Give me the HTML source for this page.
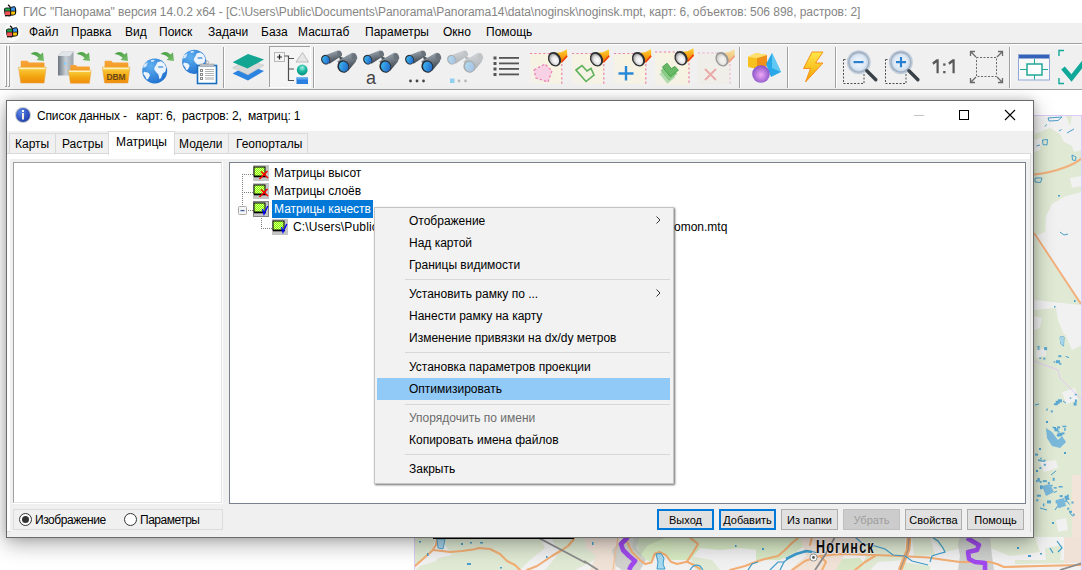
<!DOCTYPE html>
<html><head><meta charset="utf-8">
<style>
*{margin:0;padding:0;box-sizing:border-box}
html,body{width:1082px;height:570px;overflow:hidden;background:#fff;font-family:"Liberation Sans",sans-serif;font-size:12px;color:#000;position:relative}
.a{position:absolute}
.t{position:absolute;white-space:nowrap;line-height:14px}
.mi{position:absolute;left:409px;white-space:nowrap;line-height:14px}
.msep{position:absolute;left:405px;width:265px;height:1px;background:#d7d7d7}
.btn{position:absolute;top:509px;width:57px;height:21px;background:#e1e1e1;border:1px solid #adadad;text-align:center;line-height:20px;font-size:11px}
.btn.def{border:2px solid #0078d7;line-height:18px}
</style></head><body>
<!-- title -->
<div class="a" style="left:0;top:0;width:1082px;height:23px;background:#fff"></div>
<div class="t" style="left:23px;top:5px;color:#858585;letter-spacing:-0.05px">ГИС "Панорама" версия 14.0.2 x64 - [C:\Users\Public\Documents\Panorama\Panorama14\data\noginsk\noginsk.mpt, карт: 6, объектов: 506 898, растров: 2]</div>
<!-- menu -->
<div class="a" style="left:0;top:23px;width:1082px;height:20px;background:#f0f0f0"></div>
<div class="a" style="left:0;top:43px;width:1082px;height:1px;background:#a0a0a0"></div>
<div class="a" style="left:0;top:44px;width:1082px;height:1px;background:#fff"></div>
<div class="t" style="left:29px;top:25px">Файл</div>
<div class="t" style="left:71px;top:25px">Правка</div>
<div class="t" style="left:125px;top:25px">Вид</div>
<div class="t" style="left:159px;top:25px">Поиск</div>
<div class="t" style="left:208px;top:25px">Задачи</div>
<div class="t" style="left:261px;top:25px">База</div>
<div class="t" style="left:298px;top:25px">Масштаб</div>
<div class="t" style="left:365px;top:25px">Параметры</div>
<div class="t" style="left:443px;top:25px">Окно</div>
<div class="t" style="left:486px;top:25px">Помощь</div>
<!-- toolbar bg -->
<div class="a" style="left:0;top:45px;width:1082px;height:44px;background:#f0f0f0"></div>
<div class="a" style="left:0;top:89px;width:1082px;height:1px;background:#a0a0a0"></div>
<svg class="a" style="left:0;top:0" width="1082" height="90" viewBox="0 0 1082 90">
<defs>
 <linearGradient id="gFold" x1="0" y1="0" x2="0" y2="1"><stop offset="0" stop-color="#fde58a"/><stop offset="0.12" stop-color="#f9c93a"/><stop offset="0.55" stop-color="#f3a812"/><stop offset="1" stop-color="#ef8a0c"/></linearGradient>
 <linearGradient id="gTab" x1="0" y1="0" x2="0" y2="1"><stop offset="0" stop-color="#f7a53a"/><stop offset="1" stop-color="#f39a20"/></linearGradient>
 <linearGradient id="gArr" x1="0" y1="0" x2="1" y2="1"><stop offset="0" stop-color="#3f9a3c"/><stop offset="1" stop-color="#7cc070"/></linearGradient>
 <radialGradient id="gGlobe" cx="0.35" cy="0.3" r="0.8"><stop offset="0" stop-color="#5fb0f0"/><stop offset="1" stop-color="#1b6ccc"/></radialGradient>
 <linearGradient id="gSrv" x1="0" y1="0" x2="1" y2="0"><stop offset="0" stop-color="#6c7680"/><stop offset="0.5" stop-color="#c9d0d6"/><stop offset="1" stop-color="#9aa3ab"/></linearGradient>
 <linearGradient id="gLens" x1="0" y1="0" x2="1" y2="1"><stop offset="0" stop-color="#3fc0f5"/><stop offset="1" stop-color="#1f5ec4"/></linearGradient>
 <linearGradient id="gBar" x1="0" y1="0" x2="0.3" y2="1"><stop offset="0" stop-color="#a9b2ba"/><stop offset="0.5" stop-color="#78828c"/><stop offset="1" stop-color="#3f464e"/></linearGradient>
 <linearGradient id="gTorch" x1="0" y1="0" x2="0" y2="1"><stop offset="0" stop-color="#ffd23a"/><stop offset="0.6" stop-color="#f59a0a"/><stop offset="1" stop-color="#e05010"/></linearGradient>
 <radialGradient id="gGlass" cx="0.55" cy="0.6" r="0.6"><stop offset="0" stop-color="#ffffff"/><stop offset="0.55" stop-color="#e6e6e6"/><stop offset="1" stop-color="#9a9a9a"/></radialGradient>
 <linearGradient id="gBolt" x1="0" y1="0" x2="0" y2="1"><stop offset="0" stop-color="#ffe84a"/><stop offset="1" stop-color="#f5a000"/></linearGradient>
 <radialGradient id="gBall" cx="0.5" cy="0.55" r="0.6"><stop offset="0" stop-color="#f0a8f8"/><stop offset="1" stop-color="#7a48c0"/></radialGradient>
 <radialGradient id="gTeal" cx="0.5" cy="0.3" r="0.7"><stop offset="0" stop-color="#a8f0e4"/><stop offset="0.5" stop-color="#18b8a0"/><stop offset="1" stop-color="#089080"/></radialGradient>
 <linearGradient id="gCream" x1="1" y1="0" x2="0" y2="1"><stop offset="0" stop-color="#faf4dc"/><stop offset="1" stop-color="#f3f1ea"/></linearGradient>
 <radialGradient id="gMag" cx="0.5" cy="0.5" r="0.5"><stop offset="0" stop-color="#f4f8fd"/><stop offset="0.75" stop-color="#dce8f5"/><stop offset="1" stop-color="#c0cfe0"/></radialGradient>

 <g id="globe">
  <circle cx="0" cy="0" r="12.5" fill="url(#gGlobe)"/>
  <path d="M1.1 -5.5 L2.7 -8.7 L6.3 -9.7 L9.5 -7.6 L11.6 -3.4 L10.6 0.8 L7.9 2.4 L6.3 7.1 L4.8 8.2 L3.7 3.4 L1.1 0.8 L-0.5 -1.8 L0 -4Z" fill="#eef4fb"/>
  <path d="M3 -4.5 L8 -4.8 L9 -3.5 L4 -3.2Z" fill="#3d8fe0"/>
  <path d="M-10.5 0.8 L-6.3 1.8 L-4.7 4 L-6.3 7.6 L-7.9 8.7 L-9.4 5.5 L-11.5 2.4Z" fill="#eef4fb"/>
  <path d="M-11 -6.6 L-6.8 -8.7 L-8.4 -4.5 L-11.3 -3Z" fill="#eef4fb" opacity="0.85"/>
  <path d="M-3.7 -10.8 L0 -11 L-1 -9.5 L-3.5 -9.3Z" fill="#eef4fb"/>
 </g>
 <g id="folder">
  <path d="M2.3 10.5 V4.5 Q2.3 3.8 3 3.8 H9 L10.5 5.6 H25.2 Q26 5.6 26 6.4 V11 Z" fill="url(#gTab)"/>
  <path d="M0 10.2 H27.6 L25.6 26 H2.3 Z" fill="url(#gFold)" stroke="#e9a84a" stroke-width="0.6"/>
  <path d="M0.5 10.8 H27 L26.8 12.2 H0.7 Z" fill="#fff3c0" opacity="0.9"/>
 </g>
 <g id="arrow">
  <path d="M0 3 Q5 -1 10 3.5 L12.5 1.5 L13.5 10 L6 9 L8.2 7 Q5 3.5 0 3 Z" fill="url(#gArr)"/>
 </g>
 <g id="binoc">
  <path d="M1 6.5 L16.5 0.6 Q19.5 0 20.3 2.8 L20.6 6 L8.5 13.8 Z" fill="url(#gBar)"/>
  <ellipse cx="18.6" cy="3.6" rx="2.2" ry="3" transform="rotate(-25 18.6 3.6)" fill="#6a737c"/>
  <path d="M18 6 L24 8.5 L24.5 12 L19 11 Z" fill="#4d545b"/>
  <ellipse cx="4.6" cy="9.7" rx="4.4" ry="5" transform="rotate(-25 4.6 9.7)" fill="#262c32"/>
  <ellipse cx="4.9" cy="9.8" rx="3.4" ry="4" transform="rotate(-25 4.9 9.8)" fill="url(#gLens)"/>
  <path d="M16 11.5 L30.5 3 Q34.5 2 35.5 6 L35 11.5 L27 21 Z" fill="url(#gBar)"/>
  <ellipse cx="33.3" cy="6.8" rx="2.6" ry="3.6" transform="rotate(-25 33.3 6.8)" fill="#6a737c"/>
  <ellipse cx="22.3" cy="16.5" rx="5.8" ry="6.3" transform="rotate(-25 22.3 16.5)" fill="#262c32"/>
  <ellipse cx="22.7" cy="16.6" rx="4.6" ry="5.1" transform="rotate(-25 22.7 16.6)" fill="url(#gLens)"/>
 </g>
 <g id="torch">
  <path d="M1.5 -6.5 L6.5 -7 L12.5 -10 L12.8 -2 L6 4 Z" fill="url(#gTorch)"/>
  <path d="M7 3 L12.5 -3.5" stroke="#f04010" stroke-width="1.6"/>
  <ellipse cx="0" cy="0" rx="6.2" ry="7.6" transform="rotate(-30 0 0)" fill="#2c2f33"/>
  <ellipse cx="-0.3" cy="0.3" rx="4.6" ry="6" transform="rotate(-30 -0.3 0.3)" fill="url(#gGlass)"/>
 </g>
 <g id="mag">
  <circle cx="0" cy="0" r="12" fill="#c3cedb"/>
  <circle cx="0" cy="0" r="10.6" fill="#9eadc0"/>
  <circle cx="0" cy="0" r="9.3" fill="url(#gMag)"/>
  <path d="M8 8.5 L17 17.5" stroke="#394148" stroke-width="3.4" stroke-linecap="round"/>
 </g>
</defs>

<!-- app icons -->
<g id="appic">
 <path d="M4 9 Q4.5 7.3 6.8 7.5 L10.3 7.8 L11 7 Q13 6 14.8 6.3 L16 8 Q16.5 11 16 13.8 Q15.5 15.5 13.2 15.5 L11 15.7 L9.8 16.5 Q7.2 16 5.2 16.5 Q4 13 4 9Z" fill="#111"/>
 <rect x="5.1" y="8.4" width="5" height="2.3" fill="#1fa64a"/>
 <path d="M11.1 7.8 Q13 7 14.9 7.3 L15 10.7 H11.1Z" fill="#3d94ea"/>
 <rect x="5.1" y="11.4" width="5" height="3.7" fill="#ee5555"/>
 <path d="M11.1 11.4 H15 Q15.2 13.5 14.5 14.5 L11.1 14.6Z" fill="#f8c40a"/>
 <path d="M8 4.8 Q9.5 5.5 10.5 8" stroke="#111" stroke-width="1.3" fill="none"/>
</g>
<circle cx="12.5" cy="32.5" r="8.5" fill="#fbfbfb"/>
<use href="#appic" x="2" y="21"/>

<!-- grip -->
<rect x="1" y="45" width="12" height="44" fill="#f3f3f3"/>
<rect x="5" y="46" width="1" height="41" fill="#fff"/><rect x="6" y="46" width="1" height="41" fill="#a0a0a0"/><rect x="5" y="86" width="1" height="1" fill="#a0a0a0"/>
<rect x="8" y="46" width="1" height="41" fill="#fff"/><rect x="9" y="46" width="1" height="41" fill="#a0a0a0"/><rect x="8" y="86" width="1" height="1" fill="#a0a0a0"/>

<!-- open folders -->
<use href="#folder" x="18.5" y="57"/>
<use href="#arrow" x="30.5" y="51"/>
<!-- server -->
<path d="M58 56 L62 51.5 H73.5 V73 L71 75.5 H58 Z" fill="url(#gSrv)"/>
<path d="M62 51.5 H73.5 L70 56 H58Z" fill="#dfe4e8"/>
<circle cx="65" cy="63.5" r="1.2" fill="#7fd0ff"/>
<g transform="translate(68.5 62) scale(0.82)"><use href="#folder"/></g>
<use href="#arrow" x="76.5" y="51"/>
<!-- DBM -->
<use href="#folder" x="102.3" y="57"/>
<use href="#arrow" x="114.5" y="51"/>
<text x="116" y="79.5" font-family="Liberation Sans" font-size="8.5" font-weight="bold" fill="#6a4a14" text-anchor="middle" letter-spacing="-0.2">DBM</text>
<!-- globe -->
<g transform="translate(154.7 71)"><use href="#globe"/></g>
<use href="#arrow" x="160.5" y="51"/>
<!-- globe + clipboard -->
<g transform="translate(194.2 61.8) scale(0.97)"><use href="#globe"/></g>
<rect x="197.5" y="65.5" width="19" height="18" fill="#ffffff" stroke="#1a6fbf" stroke-width="1.6"/>
<rect x="200" y="64" width="14" height="2.2" fill="#bfc4c8" stroke="#8a9096" stroke-width="0.5"/>
<circle cx="207" cy="62.5" r="1.6" fill="none" stroke="#9aa0a6" stroke-width="0.8"/>
<g fill="none" stroke="#8a8a8a" stroke-width="1"><rect x="200.5" y="69.5" width="2" height="2"/><rect x="200.5" y="73.5" width="2" height="2"/><rect x="200.5" y="77.5" width="2" height="2"/></g>
<g fill="#b4b4b4"><rect x="205" y="69" width="9" height="1"/><rect x="205" y="71" width="9" height="1"/><rect x="205" y="73" width="9" height="1"/><rect x="205" y="75" width="9" height="1"/><rect x="205" y="77" width="9" height="3" fill="#d4d4d4"/></g>

<!-- separators -->
<rect x="223" y="47" width="1" height="41" fill="#a0a0a0"/><rect x="224" y="47" width="1" height="41" fill="#fff"/>
<!-- layers -->
<path d="M232.6 73.5 L248 65 L264 71 L248 80.5Z" fill="#2a84e0"/>
<path d="M232.6 67.8 L248 59.5 L264 65.3 L248 74.8Z" fill="#d9d9d9" stroke="#c4c4c4" stroke-width="0.6"/>
<path d="M232.6 62.2 L248 53.9 L264 59.5 L247.5 68.5Z" fill="#12a592"/>
<!-- pressed tree button -->
<rect x="269" y="46" width="41" height="41" fill="#f5f5f5"/>
<rect x="269" y="46" width="41" height="1" fill="#a0a0a0"/><rect x="269" y="46" width="1" height="41" fill="#a0a0a0"/>
<rect x="310" y="46" width="1" height="42" fill="#fff"/><rect x="269" y="87" width="42" height="1" fill="#fff"/>
<rect x="274.5" y="52.5" width="10" height="9" fill="#f4f4f4" stroke="#b8b8b8" stroke-width="1"/>
<path d="M277 57 H282 M279.5 54.5 V59.5" stroke="#222" stroke-width="1.2"/>
<path d="M284.5 56 H288.5 V80.5 H294 M288.5 58.5 H294 M288.5 69 H294" fill="none" stroke="#505050" stroke-width="1.2"/>
<path d="M296 62 L302.5 52.5 L308.5 62Z" fill="#e6e6e6" stroke="#b0b0b0" stroke-width="0.8"/>
<circle cx="302.2" cy="70" r="5.4" fill="url(#gTeal)"/>
<rect x="296.5" y="77.5" width="11.5" height="6.5" fill="#2a80e0"/>
<rect x="296.5" y="77.5" width="11.5" height="2" fill="#5aa8f0"/>
<rect x="313" y="47" width="1" height="41" fill="#a0a0a0"/><rect x="314" y="47" width="1" height="41" fill="#fff"/>

<!-- binoculars -->
<use href="#binoc" x="321" y="50"/>
<use href="#binoc" x="363" y="50"/>
<text x="371" y="83.5" font-family="Liberation Sans" font-size="18" fill="#454545" text-anchor="middle">a</text>
<use href="#binoc" x="405" y="50"/>
<circle cx="410.5" cy="81" r="1.4" fill="#444"/><circle cx="417" cy="81" r="1.4" fill="#444"/><circle cx="423.5" cy="81" r="1.4" fill="#444"/>
<g opacity="0.35"><use href="#binoc" x="447" y="50"/></g>
<rect x="450" y="78.5" width="4.5" height="4.5" fill="#8fd0f0"/>
<circle cx="459" cy="81" r="1.4" fill="#b8b8b8"/><circle cx="465.5" cy="81" r="1.4" fill="#b8b8b8"/>
<!-- list -->
<g fill="#555"><rect x="493.5" y="56.5" width="3" height="3"/><rect x="493.5" y="62" width="3" height="3"/><rect x="493.5" y="67.5" width="3" height="3"/><rect x="493.5" y="73" width="3" height="3"/>
<rect x="499" y="57" width="20" height="1.8"/><rect x="499" y="62.5" width="20" height="1.8"/><rect x="499" y="68" width="20" height="1.8"/><rect x="499" y="73.5" width="20" height="1.8"/></g>

<!-- torch icons -->
<g>
 <rect x="530" y="53" width="32" height="31" fill="url(#gCream)"/>
 <path d="M530 53.5 H552" stroke="#e880b0" stroke-width="1.2" stroke-dasharray="2.2 2.2"/>
 <path d="M561.8 64 V84" stroke="#e880b0" stroke-width="1.2" stroke-dasharray="2.2 2.2"/>
 <path d="M534 70 L545 64 L552 71 L548 82 L536 78Z" fill="#f8d2e4" stroke="#e880b0" stroke-width="1.2" stroke-dasharray="2.5 2"/>
 <use href="#torch" x="554.5" y="59.2"/>
</g>
<g>
 <rect x="572" y="53" width="32" height="31" fill="url(#gCream)"/>
 <path d="M572 53.5 H594" stroke="#e880b0" stroke-width="1.2" stroke-dasharray="2.2 2.2"/>
 <path d="M603.8 64 V84" stroke="#e880b0" stroke-width="1.2" stroke-dasharray="2.2 2.2"/>
 <path d="M576 70 L582 65.5 L587 71 L591 68.5 L594 75 L586 81.5Z" fill="none" stroke="#5cb05a" stroke-width="1.6"/>
 <use href="#torch" x="596.5" y="59.2"/>
</g>
<g>
 <rect x="614" y="53" width="32" height="31" fill="url(#gCream)"/>
 <path d="M614 53.5 H636" stroke="#e880b0" stroke-width="1.2" stroke-dasharray="2.2 2.2"/>
 <path d="M645.8 64 V84" stroke="#e880b0" stroke-width="1.2" stroke-dasharray="2.2 2.2"/>
 <path d="M618.5 73.5 H633.5 M626 66 V80.5" stroke="#2a88d8" stroke-width="2.4"/>
 <use href="#torch" x="638.5" y="59.2"/>
</g>
<g>
 <rect x="655" y="52" width="35" height="33" fill="url(#gCream)"/>
 <path d="M655 52 H678" stroke="#e880b0" stroke-width="1.2" stroke-dasharray="2.2 2.2"/>
 <path d="M689 63 V85" stroke="#e880b0" stroke-width="1.2" stroke-dasharray="2.2 2.2"/>
 <path d="M659.4 73.9 L664.1 70.2 L668.3 75.6 L672 73.4 L675.4 77.3 L667.3 83.7Z" fill="#b4dcb0"/>
 <path d="M660.9 70.4 L665.6 66.7 L669.8 72.1 L673.5 69.9 L676.9 73.8 L668.8 80.2Z" fill="#8ccc88" stroke="#6ab868" stroke-width="0.5"/>
 <path d="M662.4 66.9 L667.1 63.2 L671.3 68.6 L675 66.4 L678.4 70.3 L670.3 76.7Z" fill="#68b868" stroke="#3a9a3a" stroke-width="0.8"/>
 <use href="#torch" x="681" y="58.2"/>
</g>
<g opacity="0.45">
 <rect x="698" y="53" width="32" height="31" fill="#f0ece0"/>
 <path d="M698 52.8 H720" stroke="#e880b0" stroke-width="1.2" stroke-dasharray="2.2 2.2"/>
 <path d="M730 64 V84" stroke="#e880b0" stroke-width="1.2" stroke-dasharray="2.2 2.2"/>
</g>
<path d="M705 69 L716 80 M716 69 L705 80" stroke="#eba8a8" stroke-width="1.8"/>
<g opacity="0.45"><use href="#torch" x="722" y="59.2"/></g>
<rect x="739" y="47" width="1" height="41" fill="#a0a0a0"/><rect x="740" y="47" width="1" height="41" fill="#fff"/>

<!-- shapes -->
<path d="M748 57 L756 53 L767 55 L767 66 L757 69 L748 67Z" fill="#f5c020"/>
<path d="M757 58 L767 55 L767 66 L757 69Z" fill="#f0901a"/>
<path d="M748 57 L756 53 L767 55 L757 58Z" fill="#ffe070"/>
<path d="M772 53 L781 72 L771 77 L766 64Z" fill="#28a8e8"/>
<path d="M772 53 L772 68 L781 72Z" fill="#60c8f4"/>
<circle cx="761" cy="74" r="8.8" fill="url(#gBall)"/>
<rect x="787" y="47" width="1" height="41" fill="#a0a0a0"/><rect x="788" y="47" width="1" height="41" fill="#fff"/>

<!-- bolt -->
<path d="M812 52 H823 L815.5 63 H823 L805.5 82 L810.5 68.5 H803.5Z" fill="url(#gBolt)" stroke="#f58a10" stroke-width="0.9"/>
<rect x="835" y="47" width="1" height="41" fill="#a0a0a0"/><rect x="836" y="47" width="1" height="41" fill="#fff"/>

<!-- zoom out/in -->
<rect x="843.5" y="59.5" width="20.5" height="24" fill="none" stroke="#505050" stroke-width="1" stroke-dasharray="2 1.5"/>
<use href="#mag" x="858.8" y="62.2"/>
<rect x="853.5" y="61" width="10" height="2.2" fill="#2a80d0"/>
<rect x="885.5" y="59.5" width="20.5" height="24" fill="none" stroke="#505050" stroke-width="1" stroke-dasharray="2 1.5"/>
<use href="#mag" x="900.9" y="62.2"/>
<path d="M896 62.2 H906 M901 57 V67.2" stroke="#2a80d0" stroke-width="2.2"/>
<g fill="#585858"><path d="M932.3 62.6 L936.6 59.3 H938.7 V73.3 H936.5 V62.4 L933.3 64.7Z"/><rect x="943.2" y="63.4" width="2.3" height="2.3"/><rect x="943.2" y="71" width="2.3" height="2.3"/><path d="M948.3 62.6 L952.6 59.3 H954.7 V73.3 H952.5 V62.4 L949.3 64.7Z"/></g>
<!-- expand -->
<rect x="976.5" y="57.5" width="20" height="19" fill="none" stroke="#6a6a6a" stroke-width="1" stroke-dasharray="2 1.5"/>
<g stroke="#6a6a6a" stroke-width="1.3" fill="none">
 <path d="M976 57 L970.5 51.5 M970.5 56 V51.5 H975"/>
 <path d="M997 57 L1002.5 51.5 M998 51.5 H1002.5 V56"/>
 <path d="M976 77 L970.5 82.5 M970.5 78 V82.5 H975"/>
 <path d="M997 77 L1002.5 82.5 M1002.5 78 V82.5 H998"/>
</g>
<rect x="1009" y="47" width="1" height="41" fill="#a0a0a0"/><rect x="1010" y="47" width="1" height="41" fill="#fff"/>
<!-- window icon -->
<rect x="1018.5" y="54.5" width="31" height="25.5" fill="#f8f8f8" stroke="#8fa8d8" stroke-width="1"/>
<rect x="1019" y="55" width="30" height="3.5" fill="#3462b8"/>
<path d="M1020 69.5 H1027 M1042 69.5 H1048 M1034.5 59 V64 M1034.5 75 V79.5" stroke="#20a898" stroke-width="1"/>
<rect x="1027" y="64" width="15" height="11" fill="#fff" stroke="#20a898" stroke-width="1.5"/>
<!-- check -->
<path d="M1064 50.5 H1059 V56 M1064 83.5 H1059 V78" fill="none" stroke="#10a898" stroke-width="1.4"/>
<path d="M1063 68 L1071.5 78 L1084 62" fill="none" stroke="#10a898" stroke-width="4.8"/>
</svg>

<!-- map -->
<svg class="a" style="left:414px;top:115px" width="668" height="455" viewBox="414 115 668 455">
<rect x="414" y="115" width="668" height="455" fill="#f1f1f1"/>
<!-- ===== right strip ===== -->
<g fill="#dfe9d3">
 <path d="M1066 116 L1072 116 L1070 126 Z"/>
 <path d="M1034 134 L1050 128 L1060 134 L1064 142 L1072 146 L1074 152 L1082 150 L1082 192 L1066 196 L1052 204 L1046 216 L1034 220Z"/>
 <path d="M1034 220 L1046 216 L1045 232 L1034 236Z"/>
 <path d="M1034 236 L1081 305 L1034 300Z"/>
 <path d="M1034 310 L1056 308 L1058 320 L1064 335 L1082 330 L1082 537 L1034 537Z"/>
</g>
<g fill="#f1f1f1">
 <path d="M1034 140 L1042 138 L1040 150 L1034 152Z"/>
 <path d="M1070 178 L1082 176 L1082 186 L1072 188Z"/>
 <path d="M1034 316 L1042 318 L1040 328 L1034 330Z"/>
 <path d="M1062 392 L1075 388 L1078 400 L1066 404Z"/>
 <path d="M1036 350 L1046 348 L1046 356 L1036 358Z"/>
 <path d="M1068 320 L1082 318 L1082 345 L1072 350 L1066 336Z"/>
 <path d="M1040 462 L1056 460 L1058 468 L1044 472Z"/>
 <path d="M1056 520 L1066 518 L1068 530 L1058 532Z"/>
</g>
<rect x="1072" y="475" width="9" height="62" fill="#f2e4d8"/>
<path d="M1034 174.5 Q1050 173 1066 167 Q1076 163 1082 158" fill="none" stroke="#f2b07c" stroke-width="2.2"/>
<path d="M1034 233 L1081 304" fill="none" stroke="#f2b07c" stroke-width="2"/>
<path d="M1034 361 L1058 370 L1060 378 L1082 400" fill="none" stroke="#e2caf2" stroke-width="1"/>
<g fill="none" stroke="#4a9fcc" stroke-width="1">
 <path d="M1048 118 L1062 117 L1058 120.5 L1049 121Z"/>
 <path d="M1042.5 140 L1047.5 139.5 L1047 145 L1043 144.5Z"/>
 <path d="M1036.5 146 L1040 145"/>
 <path d="M1072 155 L1076 157 L1075.5 160.5 L1072.5 160Z"/>
 <path d="M1035 178 L1042 178 L1040.5 182.5 L1035 182Z"/>
 <path d="M1059 131 L1061.5 129.5 M1067 133 L1074 129 M1045 126.5 L1046.5 124.5"/>
 <path d="M1060 232 L1064 235 L1068 234"/>
 <path d="M1060 337 L1064 337 L1063.5 346 L1061 344Z"/>
 <path d="M1065.5 356.5 L1069 357.5"/>
 <path d="M1035 405 L1039 404 M1063 401 L1066 403"/>
 <path d="M1047 431 L1052 439 L1059 444 L1057 447"/>
 <path d="M1038 460 L1044 461.5 M1051 475 L1056 471 M1041 486 L1049 489 M1054 492.5 L1057 491"/>
 <path d="M1040 508 L1047 510 M1055 510 L1058 505.5 M1066 500 L1069.5 504.5 M1070 513 L1073 516.5"/>
</g>
<g fill="#4a9fcc">
 <rect x="1046" y="421" width="2" height="2"/><rect x="1054" y="427" width="2" height="2"/><rect x="1039" y="448" width="2" height="2"/>
 <rect x="1064" y="452" width="2" height="2"/><rect x="1036" y="470" width="2" height="2"/><rect x="1052" y="522" width="2" height="2"/>
 <rect x="1058" y="195" width="2" height="1.5"/><rect x="1074" y="300" width="1.5" height="2"/><rect x="1054" y="306" width="1.5" height="1.5"/>
</g>

<g fill="#5aa8d2"><rect x="1052.5" y="426.7" width="1.5" height="1.5"/><rect x="1062.4" y="425.7" width="4" height="1.5"/><rect x="1064.2" y="427.9" width="1.5" height="3"/><rect x="1054.4" y="428.3" width="4" height="3"/><rect x="1047.2" y="434.2" width="2" height="1.5"/><rect x="1057.5" y="431.1" width="2" height="1.5"/><rect x="1057.1" y="426.4" width="3" height="2"/><rect x="1056.8" y="434.3" width="4" height="2"/><rect x="1048.1" y="434.3" width="2" height="2"/><rect x="1047.9" y="436.8" width="4" height="1.5"/><rect x="1058.4" y="432.9" width="4" height="3"/><rect x="1061.5" y="432.4" width="3" height="2"/><rect x="1052.0" y="438.3" width="2" height="1.5"/><rect x="1057.5" y="433.5" width="2" height="3"/><rect x="1042.9" y="503.4" width="1.5" height="3"/><rect x="1040.0" y="485.6" width="3" height="3"/><rect x="1036.9" y="494.7" width="4" height="2"/><rect x="1044.2" y="485.8" width="3" height="3"/><rect x="1037.7" y="478.6" width="2" height="3"/><rect x="1052.7" y="477.8" width="2" height="3"/><rect x="1042.8" y="486.8" width="2" height="1.5"/><rect x="1058.6" y="486.0" width="4" height="1.5"/><rect x="1047.8" y="482.1" width="2" height="2"/><rect x="1053.7" y="487.1" width="3" height="1.5"/><rect x="1040.0" y="487.2" width="2" height="2"/><rect x="1055.7" y="500.2" width="2" height="3"/><rect x="1059.7" y="495.1" width="3" height="2"/><rect x="1039.6" y="480.9" width="2" height="2"/><rect x="1036.3" y="499.3" width="2" height="2"/><rect x="1042.8" y="480.1" width="4" height="2"/><rect x="1050.6" y="484.9" width="2" height="1.5"/><rect x="1047.0" y="500.4" width="4" height="3"/><rect x="1045.6" y="487.0" width="3" height="3"/><rect x="1037.5" y="477.9" width="2" height="3"/><rect x="1039.9" y="485.5" width="1.5" height="1.5"/><rect x="1036.0" y="480.2" width="1.5" height="2"/><rect x="1066.8" y="494.7" width="2" height="3"/><rect x="1059.4" y="499.1" width="2" height="2"/><rect x="1064.6" y="495.8" width="3" height="3"/><rect x="1064.7" y="500.5" width="2" height="1.5"/><rect x="1069.0" y="510.8" width="3" height="2"/><rect x="1065.3" y="497.9" width="4" height="2"/><rect x="1059.3" y="506.0" width="1.5" height="2"/><rect x="1072.7" y="513.7" width="2" height="2"/><rect x="1071.5" y="501.5" width="2" height="2"/><rect x="1067.2" y="507.7" width="2" height="2"/><rect x="1043.8" y="463.8" width="2" height="2"/><rect x="1040.2" y="457.7" width="1.5" height="1.5"/><rect x="1043.5" y="459.6" width="2" height="2"/><rect x="1039.4" y="467.0" width="2" height="2"/><rect x="1035.0" y="453.6" width="3" height="2"/><rect x="1038.1" y="459.7" width="4" height="1.5"/><rect x="1069.8" y="397.4" width="1.5" height="1.5"/><rect x="1074.9" y="399.5" width="2" height="3"/><rect x="1074.7" y="393.9" width="2" height="1.5"/><rect x="1073.6" y="402.5" width="3" height="3"/><rect x="1050.8" y="410.4" width="2" height="2"/><rect x="1057.9" y="399.3" width="4" height="3"/><rect x="1055.7" y="400.8" width="4" height="3"/><rect x="1053.9" y="403.2" width="4" height="2"/><rect x="1046.3" y="408.6" width="1.5" height="2"/><rect x="1039.3" y="357.4" width="2" height="1.5"/><rect x="1037.5" y="345.9" width="2" height="2"/><rect x="1037.6" y="348.4" width="2" height="1.5"/><rect x="1044.1" y="347.1" width="3" height="3"/><rect x="1043.3" y="357.6" width="2" height="2"/><rect x="1058.3" y="355.2" width="3" height="2"/><rect x="1059.3" y="362.8" width="2" height="2"/><rect x="1053.7" y="361.2" width="1.5" height="1.5"/><rect x="1055.9" y="360.2" width="4" height="3"/>
 <path d="M1046 428 L1052 432 L1058 440 L1062 436 L1066 442 L1060 448 L1052 446 L1047 438Z" fill="#7ab8da"/>
 <path d="M1042 486 L1050 484 L1054 492 L1046 496Z" fill="#7ab8da"/>
 <path d="M1056 500 L1064 498 L1066 506 L1058 508Z" fill="#7ab8da"/>
 <path d="M1059 337 L1064 337 L1063.5 346 L1061 344Z" fill="#a8d4ea"/>
</g>
<!-- ===== bottom strip ===== -->
<g fill="#dfe9d3">
 <path d="M440 537 L500 537 L500 570 L430 570 L438 558 L452 555 L445 545Z"/>
 <path d="M500 537 L540 537 L545 548 L530 560 L520 570 L500 570Z"/>
 <path d="M550 537 L600 537 L610 552 L575 570 L545 570 L560 552Z"/>
 <path d="M414 537 L436 537 L432 550 L420 562 L414 566Z"/>
 <path d="M420 566 L440 560 L470 556 L500 560 L505 570 L416 570Z"/>
 <path d="M636 537 L700 537 L700 548 L690 560 L672 560 L660 551 L650 562 L640 556Z" fill="#d6eac2"/>
 <path d="M672 537 L758 537 L758 550 L740 548 L720 550 L700 548 L688 555 L672 552Z" fill="#d8e8c6"/>
 <path d="M690 556 L712 560 L720 570 L695 570Z"/>
 <path d="M756 537 L800 537 L806 545 L796 552 L780 560 L756 560Z" fill="#d8e8c6"/>
 <path d="M820 560 L860 558 L870 570 L826 570Z" fill="#d8e8c6"/>
 <path d="M844 537 L900 537 L898 552 L860 553 L846 548Z" fill="#dfe9d3"/>
 <path d="M870 537 L905 537 L906 560 L878 562 L870 570 L860 570 L868 552Z"/>
 <path d="M912 537 L930 537 L935 555 L914 556Z"/>
 <path d="M900 562 L930 566 L930 570 L900 570Z"/>
 <path d="M930 537 L960 537 L962 548 L945 552Z"/>
 <path d="M990 537 L1035 537 L1040 552 L1010 556 L990 548Z"/>
 <path d="M1045 548 L1062 545 L1060 560 L1046 562Z"/>
 <path d="M1015 560 L1070 560 L1070 563 L1015 564Z"/>
</g>
<g fill="#f0e2d6">
 <path d="M584 537 L620 537 L616 570 L590 570 L596 556 L586 548Z"/>
 <path d="M800 537 L844 537 L846 552 L836 570 L790 570 L806 556Z"/>
 <path d="M844 537 L862 537 L860 552 L846 552Z"/>
 <path d="M1064 537 L1082 537 L1082 563 L1064 563Z"/>
</g>
<!-- gray bands -->
<path d="M624 537 L612 550 L616 566 L622 570 L640 570 L646 560 L636 548 L640 537Z" fill="#c9cbc6" opacity="0.8"/>
<path d="M634 537 L668 537 L648 545 L640 556 L632 548Z" fill="#b8c0b0" opacity="0.5"/>
<path d="M960 537 L990 537 L992 556 L994 570 L958 570 L960 556 L958 545Z" fill="#c6c8c4" opacity="0.8"/>
<!-- roads -->
<g fill="none" stroke="#f2ae74" stroke-width="2.1" stroke-linejoin="round" stroke-linecap="round">
 <path d="M415 566 L432 551 L436 545 L437.5 538"/>
 <path d="M433 550 L442 551 L450 552 L462 551 L473 549.5 L479 548 L490 549 L500 554 L507 561 L515 565 L520 570"/>
 <path d="M527 570 L537 566 L552 556 L562 550 L568 546 L574 539"/>
 <path d="M627.4 542.4 L632 552 L640 560 L645 564 L651.5 562.5 L654.7 553.7 L659.6 552 L666 555.3 L670.8 561.7 L677 564 L686.9 561.7 L693.3 552 L698 544 L690 537.6"/>
 <path d="M687.5 562 L694.4 565.3 L700 569"/>
 <path d="M730 570 L745 566 L758 561 L765 559 L778 556 L785 550 L792 543 L798 538"/>
 <path d="M792 570 L805 561 L820 556 L842 554 L875 555 L900 556 L928 557.5 L945 560 L960 562 L990 562 L997 564 L1004 567 L1040 566 L1082 565"/>
 <path d="M875 556 L865 562 L855 570"/>
 <path d="M810 545 L812 537"/>
 <path d="M822 570 L826 562 L820 556"/>
</g>
<path d="M618 537 L615 555 L613 570" fill="none" stroke="#f0c09a" stroke-width="1.3"/>

<path d="M909 537 L908 550 L904 560 L900 570" fill="none" stroke="#f2ab6a" stroke-width="4.5"/>
<path d="M909 537 L908 550 L904 560 L900 570" fill="none" stroke="#999" stroke-width="1"/>
<!-- rails -->
<g fill="none" stroke="#8c8c8c" stroke-width="1.8">
 <path d="M537 537 L586 563"/>
 <path d="M584 561 L598 570"/>
 <path d="M835 537 L825 555 L815 570"/>
 <path d="M1060 570 L1082 563"/>
</g>
<!-- purple -->
<path d="M628 537 L621 544 L623 550 L629 556 L635 561 L631 566 L629 570" fill="none" stroke="#a049ee" stroke-width="4.6" stroke-linejoin="round"/>
<path d="M967 538 L979 545 L977 550 L968 552 L969 559 L975 562 L985 563 L985 570" fill="none" stroke="#a049ee" stroke-width="4.6" stroke-linejoin="round"/>
<!-- water -->
<path d="M437 539 L445 539 L443 549 L438 548Z" fill="#a8d4ea" stroke="#4a9fcc" stroke-width="0.9"/>
<path d="M656 554 L661 553.5 L664 558 L663 564 L665 569 L657 569 L658 562Z" fill="#a8daf0" stroke="#3d9ccc" stroke-width="1"/>
<g fill="none" stroke="#3d9ccc" stroke-width="1.2">
 <path d="M690 570 Q694 563 700 566 L703 570"/>
 <path d="M748 570 L752 564 L758 562"/>
 <path d="M770 570 L778 562 L784 562 L790 557 L800 553 L810 551 L818 553"/>
 <path d="M786 559 L796 554 L806 551 L812 552" stroke-width="2.6"/>
 <path d="M784 562 L780 570"/>
 <path d="M855 537 L863 544 L875 546 L885 549 L893 555 L905 556 L912 561 L920 563 L928 565"/>
 <path d="M932 537 L938 541 L943 548 L945 552 L938 554 L932 556 L930 562"/>
 <path d="M1057 541 L1062 548 L1058 552 M1050 548 L1053 553"/>
</g>
<g fill="#4a9fcc">
 <rect x="419" y="541" width="2" height="1.5"/><rect x="427" y="553" width="1.5" height="3"/><rect x="461" y="543" width="2" height="2"/><rect x="470" y="542" width="2" height="1.5"/>
 <rect x="480" y="542" width="3" height="1.5"/><rect x="467" y="563" width="4" height="2"/><rect x="500" y="567" width="2" height="1.5"/><rect x="546" y="556" width="1.5" height="2"/>
 <rect x="592" y="542" width="1.5" height="3"/><rect x="735" y="545" width="1.5" height="2"/><rect x="762" y="548" width="2" height="2"/><rect x="1017" y="547" width="2" height="2"/>
 <rect x="1028" y="555" width="3" height="2"/><rect x="1040" y="553" width="2" height="1.5"/>
</g>
<!-- Noginsk label -->
<text x="0" y="0" transform="translate(816 552.8) scale(0.72 1)" font-family="Liberation Sans" font-size="17.5" font-weight="bold" fill="#111" letter-spacing="1.6" style="paint-order:stroke" stroke="#f4f4f4" stroke-width="1.5">Ногинск</text>
<circle cx="813.5" cy="557.5" r="3.6" fill="#fff" stroke="#999" stroke-width="1"/>
<circle cx="813.5" cy="557.5" r="1.4" fill="#555"/>
<!-- scale bar -->
<rect x="433" y="537" width="141" height="2" fill="#000"/>
<!-- borders -->
<rect x="414" y="115" width="668" height="1" fill="#dccbf4"/>
<rect x="414" y="115" width="1" height="455" fill="#dccbf4"/>
<rect x="1081" y="115" width="1" height="455" fill="#dccbf4"/>
</svg>

<!-- dialog shadow -->
<div class="a" style="left:6px;top:100px;width:1028px;height:438px;box-shadow:0 6px 20px rgba(0,0,0,0.32), 0 0 8px rgba(0,0,0,0.15)"></div>
<!-- dialog -->
<div class="a" style="left:6px;top:100px;width:1028px;height:438px;background:#f0f0f0;border:1px solid #6b6b6b"></div>
<div class="a" style="left:7px;top:101px;width:1026px;height:30px;background:#fff"></div>
<div class="t" style="left:37px;top:109px;letter-spacing:-0.16px">Список данных -&nbsp;&nbsp; карт: 6,&nbsp; растров: 2,&nbsp; матриц: 1</div>
<div class="a" style="left:914px;top:115px;width:10px;height:1px;background:#c4c4c4"></div>
<div class="a" style="left:959px;top:110px;width:10px;height:10px;border:1px solid #000"></div>
<svg class="a" style="left:1004px;top:109px" width="13" height="13"><path d="M1 1 L11 11 M11 1 L1 11" stroke="#000" stroke-width="1.1"/></svg>
<!-- tab page -->
<div class="a" style="left:7px;top:153px;width:1024px;height:379px;background:#fff;border:1px solid #d9d9d9;border-left:none"></div>
<div class="a" style="left:10px;top:159px;width:1020px;height:373px;background:#f0f0f0"></div>
<!-- tabs -->
<div class="a" style="left:9px;top:133px;width:47px;height:20px;background:#f0f0f0;border:1px solid #d9d9d9;border-bottom:none"></div>
<div class="a" style="left:55px;top:133px;width:54px;height:20px;background:#f0f0f0;border:1px solid #d9d9d9;border-bottom:none"></div>
<div class="a" style="left:174px;top:133px;width:55px;height:20px;background:#f0f0f0;border:1px solid #d9d9d9;border-bottom:none"></div>
<div class="a" style="left:228px;top:133px;width:80px;height:20px;background:#f0f0f0;border:1px solid #d9d9d9;border-bottom:none"></div>
<div class="a" style="left:108px;top:131px;width:67px;height:24px;background:#fff;border:1px solid #d9d9d9;border-bottom:none"></div>
<div class="t" style="left:15px;top:137px">Карты</div>
<div class="t" style="left:62px;top:137px">Растры</div>
<div class="t" style="left:116px;top:135px">Матрицы</div>
<div class="t" style="left:179px;top:137px">Модели</div>
<div class="t" style="left:236px;top:137px">Геопорталы</div>
<!-- left panel -->
<div class="a" style="left:12px;top:161px;width:211px;height:343px;background:#fff;border-top:1px solid #f0f0f0;border-left:1px solid #f0f0f0;border-right:1px solid #fff;border-bottom:1px solid #fff"></div>
<div class="a" style="left:13px;top:162px;width:209px;height:341px;background:#fff;border-top:1px solid #a0a0a0;border-left:1px solid #a0a0a0;border-right:1px solid #e3e3e3;border-bottom:1px solid #e3e3e3"></div>
<!-- radio group -->
<div class="a" style="left:13px;top:509px;width:210px;height:21px;border:1px solid #dcdcdc"></div>
<div class="a" style="left:19px;top:513px;width:13px;height:13px;border-radius:50%;border:1px solid #333;background:#fff"></div>
<div class="a" style="left:22px;top:516px;width:7px;height:7px;border-radius:50%;background:#333"></div>
<div class="t" style="left:35px;top:513px;letter-spacing:-0.45px">Изображение</div>
<div class="a" style="left:124px;top:513px;width:13px;height:13px;border-radius:50%;border:1px solid #333;background:#fff"></div>
<div class="t" style="left:140px;top:513px;letter-spacing:-0.5px">Параметры</div>
<!-- right panel -->
<div class="a" style="left:229px;top:162px;width:797px;height:342px;background:#fff;border:1px solid #7a8290"></div>
<svg class="a" style="left:230px;top:163px" width="200" height="80" viewBox="230 163 200 80">
<defs>
 <pattern id="chk" width="2" height="2" patternUnits="userSpaceOnUse"><rect width="2" height="2" fill="#7fff00"/><rect width="1" height="1" fill="#d8ff80"/><rect x="1" y="1" width="1" height="1" fill="#d8ff80"/></pattern>
 <g id="mtx">
  <rect x="0" y="0" width="16" height="16" fill="#c4c4c4"/>
  <rect x="0.5" y="1.5" width="12" height="10" fill="#000"/>
  <rect x="1.5" y="2.5" width="10" height="8" fill="url(#chk)"/>
  <rect x="1" y="11" width="12" height="1.3" fill="#000"/>
 </g>
 <g id="xm"><path d="M8 6.5 L15 13 M14.5 6 L6.5 14" stroke="#ff0000" stroke-width="1.5"/></g>
 <g id="cm"><path d="M9.5 8 L11 13 L14.8 5" fill="none" stroke="#0000ff" stroke-width="1.4"/></g>
</defs>
<g fill="#808080"><path d="M242 174h1v1h-1zM242 176h1v1h-1zM242 178h1v1h-1zM242 180h1v1h-1zM242 182h1v1h-1zM242 184h1v1h-1zM242 186h1v1h-1zM242 188h1v1h-1zM242 190h1v1h-1zM242 192h1v1h-1zM242 194h1v1h-1zM242 196h1v1h-1zM242 198h1v1h-1zM242 200h1v1h-1zM242 202h1v1h-1zM242 204h1v1h-1zM244 174h1v1h-1zM246 174h1v1h-1zM248 174h1v1h-1zM250 174h1v1h-1zM252 174h1v1h-1zM244 192h1v1h-1zM246 192h1v1h-1zM248 192h1v1h-1zM250 192h1v1h-1zM252 192h1v1h-1zM248 210h1v1h-1zM250 210h1v1h-1zM252 210h1v1h-1zM261 218h1v1h-1zM261 220h1v1h-1zM261 222h1v1h-1zM261 224h1v1h-1zM261 226h1v1h-1zM261 228h1v1h-1zM263 228h1v1h-1zM265 228h1v1h-1zM267 228h1v1h-1zM269 228h1v1h-1zM271 228h1v1h-1z"/></g>
<rect x="238.5" y="206.5" width="8" height="8" rx="1" fill="#f4f4f4" stroke="#a8a8a8" stroke-width="1"/>
<rect x="240.5" y="210" width="4" height="1.2" fill="#3a5a9a"/>
<use href="#mtx" x="253" y="165"/><use href="#xm" x="253" y="165"/>
<use href="#mtx" x="253" y="183"/><use href="#xm" x="253" y="183"/>
<use href="#mtx" x="253" y="201"/><use href="#cm" x="253" y="201"/>
<rect x="253.5" y="201.5" width="15" height="15" fill="none" stroke="#404040" stroke-width="1" stroke-dasharray="1 1"/>
<use href="#mtx" x="272" y="219"/><use href="#cm" x="272" y="219"/>
<rect x="272" y="200" width="101" height="18" fill="#0078d7"/>
</svg>
<div class="t" style="left:274px;top:166px;font-size:12px">Матрицы высот</div>
<div class="t" style="left:274px;top:184px;font-size:12px">Матрицы слоёв</div>
<div class="t" style="left:274px;top:202px;font-size:12px;color:#fff">Матрицы качеств</div>
<div class="t" style="left:293px;top:220px;font-size:12px;letter-spacing:0.15px">C:\Users\Public\Documents</div>
<div class="t" style="left:674px;top:220px;font-size:12px">omon.mtq</div>

<!-- buttons -->
<div class="btn def" style="left:657px">Выход</div>
<div class="btn def" style="left:719px">Добавить</div>
<div class="btn" style="left:781px">Из папки</div>
<div class="btn" style="left:843px;color:#9d9d9d;background:#cccccc;border-color:#bfbfbf">Убрать</div>
<div class="btn" style="left:905px">Свойства</div>
<div class="btn" style="left:967px">Помощь</div>
<!-- context menu -->
<div class="a" style="left:374px;top:207px;width:300px;height:277px;background:#f2f2f2;border:1px solid #c4c4c4;box-shadow:1px 1px 2px rgba(0,0,0,.58)"></div>
<div class="mi" style="top:214px">Отображение</div>
<div class="mi" style="top:236px">Над картой</div>
<div class="mi" style="top:258px">Границы видимости</div>
<div class="msep" style="top:279px"></div>
<div class="mi" style="top:287px">Установить рамку по ...</div>
<div class="mi" style="top:309px">Нанести рамку на карту</div>
<div class="mi" style="top:331px">Изменение привязки на dx/dy метров</div>
<div class="msep" style="top:352px"></div>
<div class="mi" style="top:360px">Установка параметров проекции</div>
<div class="a" style="left:377px;top:378px;width:293px;height:22px;background:#91c9f7"></div>
<div class="mi" style="top:382px">Оптимизировать</div>
<div class="msep" style="top:404px"></div>
<div class="mi" style="top:411px;color:#6d6d6d">Упорядочить по имени</div>
<div class="mi" style="top:433px">Копировать имена файлов</div>
<div class="msep" style="top:454px"></div>
<div class="mi" style="top:462px">Закрыть</div>
<svg class="a" style="left:654px;top:214px" width="8" height="90"><path d="M2.5 2.5 L6 6 L2.5 9.5 M2.5 75.5 L6 79 L2.5 82.5" fill="none" stroke="#333" stroke-width="1"/></svg>
<svg class="a" style="left:14px;top:106px" width="18" height="18" viewBox="0 0 18 18">
 <defs><radialGradient id="gInfo" cx="0.35" cy="0.3" r="0.8"><stop offset="0" stop-color="#5a86e8"/><stop offset="1" stop-color="#1a3aa8"/></radialGradient></defs>
 <circle cx="9" cy="9" r="8" fill="#c8c8c8"/>
 <circle cx="9" cy="9" r="7" fill="url(#gInfo)"/>
 <rect x="8" y="4" width="2" height="2" fill="#fff"/>
 <rect x="8" y="7" width="2" height="6.5" fill="#f4f0e0"/>
</svg>

</body></html>
